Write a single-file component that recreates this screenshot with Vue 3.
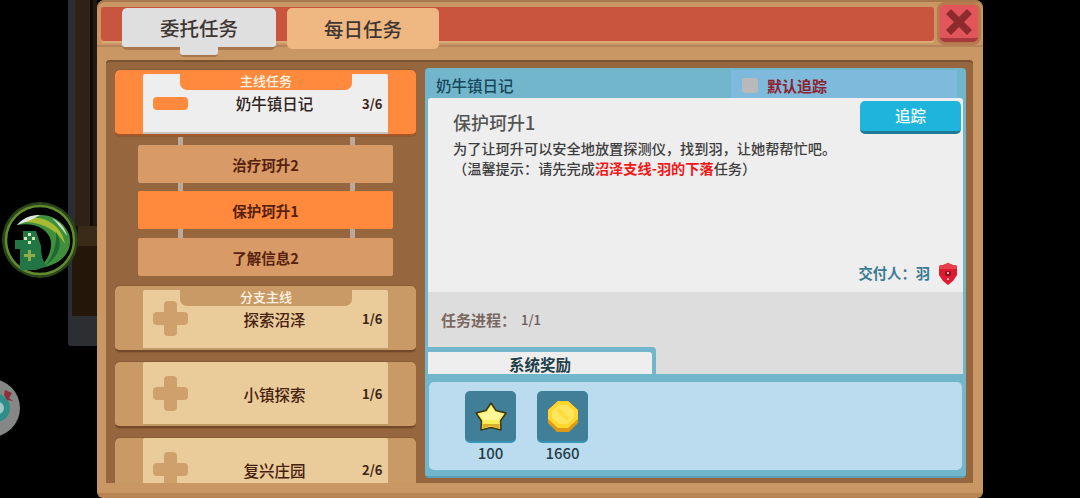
<script setup>
const subTasks = [
  { name: '治疗珂升2', active: false },
  { name: '保护珂升1', active: true },
  { name: '了解信息2', active: false }
]

const groups = [
  { tag: '分支主线', name: '探索沼泽', count: '1/6' },
  { tag: '', name: '小镇探索', count: '1/6' },
  { tag: '', name: '复兴庄园', count: '2/6' }
]
</script>

<template>
  <div class="screen">
    <!-- game world behind the dialog -->
    <div class="world">
      <div class="pillar">
        <div class="pillar-top"></div>
        <div class="pillar-knot"></div>
        <div class="pillar-low"></div>
      </div>
    </div>

    <svg class="float-game" width="80" height="80" viewBox="0 0 80 80">
      <circle cx="40" cy="40" r="38" fill="#2c4319" />
      <circle cx="40" cy="40" r="34" fill="#000" stroke="#5f8c2f" stroke-width="2.5" />
      <path d="M17 25 C30 11 58 10 69 34 C74 50 62 66 38 68 C50 60 54 44 49 36 C45 28 34 22 17 25 Z" fill="#3f8f3c" />
      <path d="M26 19 C44 14 62 26 65 44 C58 32 46 23 26 22 Z" fill="#a7bb32" />
      <path d="M17 25 C24 17 32 15 40 15 C34 19 26 22 17 25 Z" fill="#dfe8dc" />
      <path d="M52 18 C60 22 65 28 67 36 C62 29 58 24 52 18 Z" fill="#cfdcc4" />
      <path d="M56 32 C63 42 60 56 46 65 C54 54 57 43 56 32 Z" fill="#1d6a33" />
      <path d="M23 31 H36 L41 46 C41 56 43 62 47 66 L36 70 H20 V49 H15 V40 H23 Z" fill="#227645" />
      <g fill="#d3e4b0">
        <rect x="28" y="33" width="3" height="3" />
        <rect x="24" y="37" width="3" height="3" />
        <rect x="32" y="37" width="3" height="3" />
        <rect x="28" y="41" width="3" height="3" />
      </g>
      <path d="M28 50 h3 v4 h4 v3 h-4 v4 h-3 v-4 h-4 v-3 h4 Z" fill="#8fae4a" />
    </svg>

    <svg class="float-disc" width="30" height="60" viewBox="0 0 30 60">
      <circle cx="-9" cy="30" r="29" fill="#858787" />
      <circle cx="-4" cy="30" r="14" fill="#2f8d8a" />
      <circle cx="-2" cy="30" r="6" fill="#9fc9c6" />
      <path d="M5 12 L12 15 L9 20 L13 23 L7 22 L4 17 Z" fill="#8c2f38" />
    </svg>

    <section class="panel">
      <header class="top">
        <div class="bar">
          <div class="tab tab-on">委托任务</div>
          <div class="tab">每日任务</div>
        </div>
        <button class="close" type="button">
          <svg width="30" height="30" viewBox="0 0 30 30">
            <path d="M2 7 L7 2 L15 10 L23 2 L28 7 L20 15 L28 23 L23 28 L15 20 L7 28 L2 23 L10 15 Z" fill="#8c2a2c" />
          </svg>
        </button>
      </header>

      <div class="content">
        <aside class="list">
          <div class="card card-on has-tag">
            <div class="tag">主线任务</div>
            <div class="card-inner">
              <span class="minus"></span>
              <span class="card-name">奶牛镇日记</span>
              <span class="card-count">3/6</span>
            </div>
          </div>

          <template v-for="item in subTasks" :key="item.name">
            <div class="link"><i></i><i></i></div>
            <div class="sub" :class="{ 'sub-on': item.active }">{{ item.name }}</div>
          </template>

          <div v-for="g in groups" :key="g.name" class="card" :class="{ 'has-tag': g.tag }">
            <div v-if="g.tag" class="tag">{{ g.tag }}</div>
            <div class="card-inner">
              <svg class="plus" width="35" height="35" viewBox="0 0 35 35">
                <rect x="0" y="11" width="35" height="13" rx="4" fill="#cfa06c" />
                <rect x="11" y="0" width="13" height="35" rx="4" fill="#cfa06c" />
              </svg>
              <span class="card-name">{{ g.name }}</span>
              <span class="card-count">{{ g.count }}</span>
            </div>
          </div>
        </aside>

        <main class="detail">
          <div class="detail-head">
            <span class="head-title">奶牛镇日记</span>
            <div class="auto-track">
              <span class="check"></span>
              <span>默认追踪</span>
            </div>
          </div>

          <div class="detail-body">
            <button class="track" type="button">追踪</button>
            <h2 class="task-title">保护珂升1</h2>
            <p class="task-desc">为了让珂升可以安全地放置探测仪，找到羽，让她帮帮忙吧。</p>
            <p class="task-hint">（温馨提示：请先完成<b>沼泽支线-羽的下落</b>任务）</p>
            <div class="giver">
              <span class="giver-name">交付人：羽</span>
              <svg width="18" height="22" viewBox="0 0 18 22">
                <path d="M4 2 L9 0 L14 2 H17 L18 4 V12 L14 18 L9 22 L4 18 L0 12 V4 L1 2 Z" fill="#dc1a30" />
                <path d="M4 2 L9 0 L14 2 H17 L18 4 V6 H0 V4 L1 2 Z" fill="#e8404c" />
                <rect x="6" y="8" width="6" height="5" rx="2" fill="#8c1420" />
                <rect x="8" y="9" width="2" height="2" fill="#f6a8ae" />
                <rect x="8" y="15" width="2" height="2" fill="#f2a0a6" />
              </svg>
            </div>
          </div>

          <div class="progress">
            <div class="progress-line">
              <span class="progress-label">任务进程：</span>
              <span class="progress-num">1/1</span>
            </div>
            <div class="reward-tab"><span>系统奖励</span></div>
          </div>

          <div class="rewards">
            <div class="reward">
              <div class="reward-box">
                <svg width="34" height="31" viewBox="0 0 34 31">
                  <path d="M17 2 L22 9.5 L32 12 L26.5 20 L27 29 L17 26.5 L7 29 L7.5 20 L2 12 L12 9.5 Z" fill="#fff05a" stroke="#3e3512" stroke-width="1.5" stroke-linejoin="round" />
                  <path d="M17 5 L20.5 11 L29 13 L24 19 H10 L5 13 L13.5 11 Z" fill="#fff79a" />
                  <path d="M8.5 27.5 L17 25 L25.5 27.5 L25.5 23 H8.5 Z" fill="#dcae2e" />
                </svg>
              </div>
              <span class="reward-num">100</span>
            </div>
            <div class="reward">
              <div class="reward-box">
                <svg width="30" height="31" viewBox="0 0 30 31">
                  <path d="M10 0 H20 L30 9 V22 L21 31 H9 L0 22 V9 Z" fill="#dd9a18" />
                  <path d="M10 0 H20 L30 9 V18 L20 27 H10 L0 18 V9 Z" fill="#ffd52e" />
                  <path d="M11 4 H19 L26 10 V17 L19 23 H11 L4 17 V10 Z" fill="#ffe65e" />
                  <path d="M8 10 L11 7 L22 17 L19 20 Z" fill="#ffdc3e" />
                </svg>
              </div>
              <span class="reward-num">1660</span>
            </div>
          </div>
        </main>
      </div>
    </section>
  </div>
</template>

<style>
html, body {
  margin: 0;
  background: #000;
}
</style>

<style scoped>
.screen {
  position: relative;
  display: flex;
  width: 1080px;
  height: 498px;
  overflow: hidden;
  background: #000;
  font-family: "Noto Sans CJK SC", "Noto Sans", sans-serif;
}

/* world behind */
.world {
  width: 97px;
  flex: none;
  box-sizing: border-box;
  padding-left: 68px;
}
.pillar {
  height: 346px;
  display: flex;
  flex-direction: column;
  background: #2b2e32;
  border-radius: 0 0 0 3px;
}
.pillar-top {
  height: 226px;
  background: linear-gradient(90deg, #2a2e33 0 7px, #2f2115 7px 22px, #0f0b08 22px 25px, #241810 25px);
}
.pillar-knot {
  height: 20px;
  margin-left: 4px;
  background: linear-gradient(90deg, #1a120a 0 6px, #3a2a18 6px 27px, #241810 27px);
}
.pillar-low {
  height: 70px;
  margin-left: 4px;
  background: #241609;
}
.float-game {
  position: absolute;
  left: 0;
  top: 200px;
}
.float-disc {
  position: absolute;
  left: 0;
  top: 378px;
}

/* dialog */
.panel {
  width: 886px;
  height: 498px;
  flex: none;
  box-sizing: border-box;
  background: #c99763;
  border-radius: 8px 8px 6px 6px;
  border-bottom: 5px solid #b98554;
  box-shadow: inset 0 2px 0 #a9774c;
}
.top {
  display: flex;
  height: 47px;
  box-sizing: border-box;
  padding: 7px 5px 0 4px;
  gap: 6px;
  border-bottom: 2px solid #b5845a;
}
.bar {
  flex: 1;
  height: 34px;
  display: flex;
  align-items: flex-start;
  gap: 11px;
  padding-left: 21px;
  background: #c9553f;
  border-radius: 3px;
  box-shadow: 0 2px 0 #dba878;
}
.tab {
  position: relative;
  width: 152px;
  height: 41px;
  margin-top: 1px;
  display: flex;
  align-items: center;
  justify-content: center;
  background: #efb883;
  border-radius: 5px;
  color: #3f3631;
  font-size: 19.5px;
  font-weight: 500;
}
.tab-on {
  width: 154px;
  height: 42px;
  background: #dfdfdf;
  border-bottom: 3px solid #a9774c;
  box-sizing: border-box;
}
.tab-on::after {
  content: "";
  position: absolute;
  left: 58px;
  bottom: -10px;
  width: 38px;
  height: 8px;
  background: #dfdfdf;
  border-radius: 0 0 4px 4px;
  border-bottom: 2px solid #a9774c;
}
.close {
  width: 38px;
  height: 37px;
  margin-top: -2px;
  padding: 0;
  border: 0;
  border-bottom: 4px solid #a83a3e;
  border-radius: 5px;
  background: #e2555a;
  box-shadow: 0 0 0 3px #b8794f;
  display: flex;
  align-items: center;
  justify-content: center;
}
.content {
  display: flex;
  gap: 9px;
  height: 423px;
  margin: 13px 10px 0 9px;
  padding: 0 7px 0 9px;
  box-sizing: border-box;
  overflow: hidden;
  background: #96663f;
  border-radius: 4px 4px 0 0;
  box-shadow: inset 0 2px 0 #7d5231;
}

/* left list */
.list {
  width: 301px;
  flex: none;
  padding-top: 10px;
  display: flex;
  flex-direction: column;
  height: 423px;
  box-sizing: border-box;
  overflow: hidden;
}
.card {
  position: relative;
  display: flex;
  flex: none;
  height: 66px;
  margin-top: 10px;
  box-sizing: border-box;
  padding: 0 28px;
  background: #ca9a66;
  border-radius: 5px;
  border-bottom: 2px solid #74492a;
  box-shadow: 0 0 0 1px #8a5c38;
}
.has-tag {
  padding-top: 4px;
}
.card-on {
  margin-top: 0;
  background: #ff8a3d;
  border-bottom-color: #a4582a;
}
.card-inner {
  flex: 1;
  display: flex;
  align-items: center;
  padding: 2px 4px 0 10px;
  background: #eacb9a;
  border-bottom: 2px solid #c09a66;
  border-radius: 2px 2px 0 0;
}
.has-tag .card-inner {
  padding-top: 0;
}
.card-on .card-inner {
  background: #eeeeee;
  border-bottom-color: #c9c4bd;
}
.card-name {
  flex: 1;
  padding-right: 1px;
  text-align: center;
  color: #45210f;
  font-size: 15.5px;
  font-weight: 500;
}
.card-on .card-name {
  color: #2f2320;
}
.card-count {
  width: 22px;
  color: #3c2416;
  font-size: 13px;
  font-weight: 700;
}
.tag {
  position: absolute;
  left: 65px;
  top: 0;
  width: 172px;
  height: 20px;
  line-height: 22px;
  text-align: center;
  color: #fff3e2;
  font-size: 13px;
  font-weight: 500;
  background: #ca9a66;
  border-radius: 0 0 7px 7px;
}
.card-on .tag {
  background: #ff8a3d;
}
.minus {
  width: 35px;
  height: 13px;
  flex: none;
  background: #ff8a3d;
  border-radius: 4px;
}
.plus {
  flex: none;
}
.link {
  height: 8.5px;
  flex: none;
  display: flex;
  justify-content: space-between;
  padding: 0 61px 0 63px;
}
.link i {
  width: 5px;
  background: #bda99a;
}
.sub {
  flex: none;
  height: 38px;
  box-sizing: border-box;
  padding-top: 1px;
  margin: 0 23px;
  display: flex;
  align-items: center;
  justify-content: center;
  border-radius: 2px;
  background: #d89a66;
  color: #56210e;
  font-size: 14.5px;
  font-weight: 700;
}
.sub-on {
  background: #ff8a3d;
}

/* right detail */
.detail {
  width: 541px;
  height: 410px;
  flex: none;
  margin-top: 8px;
  box-sizing: border-box;
  display: flex;
  flex-direction: column;
  background: #72b6cc;
  border-radius: 4px;
  border-bottom: 2px solid #5f9fb5;
}
.detail-head {
  height: 30px;
  flex: none;
  display: flex;
  justify-content: space-between;
  padding: 0 9px 0 11px;
}
.head-title {
  color: #17475a;
  font-size: 15.5px;
  font-weight: 500;
  line-height: 34px;
}
.auto-track {
  width: 226px;
  box-sizing: border-box;
  margin-top: 2px;
  padding: 2px 0 0 11px;
  display: flex;
  align-items: center;
  gap: 9px;
  background: #7dbadc;
  color: #8f1f2f;
  font-size: 15px;
  font-weight: 700;
}
.check {
  width: 16px;
  height: 15px;
  border-radius: 3px;
  background: #b9b9b9;
}
.detail-body {
  position: relative;
  height: 194px;
  flex: none;
  margin: 0 3px;
  box-sizing: border-box;
  padding: 11px 0 0 25px;
  background: #eeeeee;
  border-radius: 3px 3px 0 0;
}
.track {
  position: absolute;
  right: 2px;
  top: 3px;
  width: 101px;
  height: 33px;
  padding: 0 0 3px;
  border: 0;
  border-bottom: 3px solid #1d7a95;
  border-radius: 5px;
  background: #1eb4dc;
  color: #f0fbff;
  font-family: inherit;
  font-size: 15.5px;
  font-weight: 500;
}
.task-title {
  margin: 0;
  color: #555;
  font-size: 18px;
  font-weight: 500;
  line-height: 26px;
}
.task-desc,
.task-hint {
  margin: 0;
  color: #3d3d3d;
  font-size: 14.2px;
  font-weight: 500;
  line-height: 20px;
  white-space: nowrap;
}
.task-desc {
  margin-top: 3px;
}
.task-hint b {
  color: #f01818;
  font-weight: 700;
}
.giver {
  position: absolute;
  right: 6px;
  bottom: 7px;
  display: flex;
  align-items: center;
  gap: 9px;
  color: #3a7b93;
  font-size: 14.3px;
  font-weight: 700;
}
.giver-name {
  margin-bottom: 2px;
}
.progress {
  position: relative;
  height: 82px;
  flex: none;
  margin: 0 3px;
  background: #dddddd;
}
.progress-line {
  padding: 15px 0 0 13px;
  display: flex;
  align-items: center;
  height: 24px;
}
.progress-label {
  color: #7a675f;
  font-size: 15px;
  font-weight: 700;
}
.progress-num {
  margin-left: 5px;
  color: #6a5a54;
  font-size: 13px;
  font-weight: 500;
}
.reward-tab {
  position: absolute;
  left: 0;
  bottom: 0;
  width: 228px;
  height: 27px;
  box-sizing: border-box;
  padding: 5px 4px 0 0;
  background: #72b6cc;
  border-radius: 0 4px 0 0;
}
.reward-tab span {
  display: block;
  height: 22px;
  line-height: 25px;
  text-align: center;
  background: #eeeeee;
  color: #1f3f4a;
  font-size: 15.5px;
  font-weight: 700;
  border-radius: 0 3px 0 0;
}
.rewards {
  flex: 1;
  margin: 8px 4px 6px;
  box-sizing: border-box;
  padding: 9px 0 0 36px;
  display: flex;
  gap: 21px;
  background: #badcee;
  border-radius: 5px;
}
.reward {
  display: flex;
  flex-direction: column;
  align-items: center;
  width: 51px;
}
.reward-box {
  width: 51px;
  height: 52px;
  box-sizing: border-box;
  display: flex;
  align-items: center;
  justify-content: center;
  background: #417f98;
  border-radius: 5px;
  border-bottom: 2px solid #3a95b5;
}
.reward-num {
  color: #253c47;
  font-size: 15px;
  line-height: 19px;
  font-weight: 500;
}
</style>
